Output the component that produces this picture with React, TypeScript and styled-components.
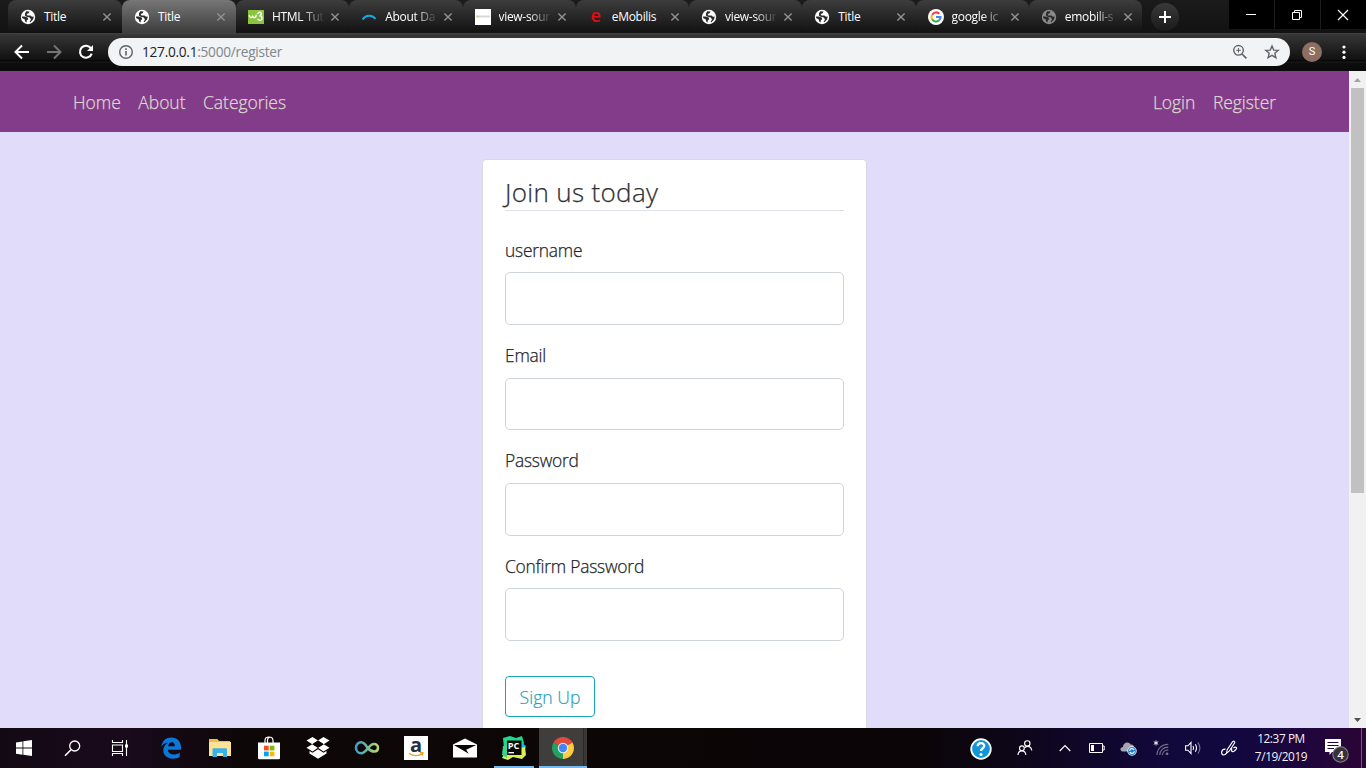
import React from 'react';
import styled, { createGlobalStyle } from 'styled-components';

const Global = createGlobalStyle`
  *, *::before, *::after { box-sizing: border-box; }
  html, body { margin: 0; padding: 0; overflow: hidden; }
  body { font-family: "Open Sans", "Noto Sans", sans-serif; }
  svg { display: block; flex: none; overflow: visible; }
`;

const Screen = styled.div`
  width: 1366px;
  height: 768px;
  display: flex;
  flex-direction: column;
  overflow: hidden;
  background: #000;
`;

/* ---------- browser window ---------- */

const TabStrip = styled.div`
  height: 33px;
  flex: none;
  display: flex;
  padding-left: 8px;
  background: linear-gradient(#1b1b1b, #121212);
`;

const TabShell = styled.div<{ $active?: boolean; $divider?: boolean; $wide?: boolean }>`
  position: relative;
  width: ${p => (p.$wide ? 114 : 113.25)}px;
  height: 33px;
  flex: none;
  display: flex;
  align-items: center;
  padding-left: 12px;
  border-radius: ${p => (p.$active ? '8px 8px 0 0' : '8px 8px 6px 6px')};
  background: ${p => (p.$active ? 'linear-gradient(#767676, #3c3c3c)' : 'linear-gradient(#3d3d3d, #111)')};
  &::after {
    content: '';
    display: ${p => (p.$divider ? 'block' : 'none')};
    position: absolute;
    right: -1px;
    top: 7px;
    width: 1px;
    height: 20px;
    background: #5c5c5c;
  }
`;

const TabTitle = styled.span<{ $fade?: boolean }>`
  width: 54px;
  margin: 1px 5px 0 8px;
  height: 18px;
  line-height: 17px;
  font-size: 12px;
  letter-spacing: -0.3px;
  color: #fff;
  white-space: nowrap;
  mask-image: ${p => (p.$fade ? 'linear-gradient(90deg, #000 55%, transparent 98%)' : 'none')};
`;

const NewTab = styled.div`
  width: 28px;
  height: 28px;
  margin: 3px 0 0 9px;
  border-radius: 50%;
  display: flex;
  align-items: center;
  justify-content: center;
  background: linear-gradient(#3a3a3a, #1a1a1a);
`;

const WindowButtons = styled.div`
  margin-left: auto;
  width: 137px;
  height: 29px;
  display: flex;
  gap: 1px;
  background: #1c1c1c;
`;

const WindowButton = styled.div`
  flex: 1;
  display: flex;
  align-items: center;
  justify-content: center;
  padding-right: 2px;
  background: #000;
`;

const Toolbar = styled.div`
  height: 38px;
  flex: none;
  display: flex;
  align-items: center;
  padding-left: 13px;
  background: linear-gradient(#444 0, #353535 2px, #101010 27px, #000 28px, #1e1e1e 29px, #0d0d0d 30px, #0a0a0a 38px);
`;

const NavIcons = styled.div`
  width: 95px;
  display: flex;
  gap: 14px;
`;

const Omnibox = styled.div`
  width: 1182px;
  height: 28px;
  border-radius: 14px;
  background: #f1f3f4;
  display: flex;
  align-items: center;
  padding: 0 10px;
`;

const Address = styled.span`
  flex: 1;
  margin-left: 8px;
  font-size: 13.7px;
  letter-spacing: -0.28px;
  line-height: 20px;
  color: #80868b;
  b { font-weight: 400; color: #202124; }
`;

const OmniActions = styled.div`
  display: flex;
  gap: 16px;
`;

const Avatar = styled.div`
  width: 20px;
  height: 20px;
  margin: 0 20px 0 12px;
  border-radius: 50%;
  background: #8d6e63;
  color: #fff;
  font: 11px/20px Roboto, sans-serif;
  text-align: center;
`;

/* ---------- web page ---------- */

const Viewport = styled.div`
  height: 657px;
  flex: none;
  display: flex;
  overflow: hidden;
`;

const Page = styled.div`
  width: 1349px;
  display: flex;
  flex-direction: column;
  align-items: center;
  background: #e1dcfa;
  font-weight: 300;
  -webkit-text-stroke-width: 0.25px;
`;

const Navbar = styled.nav`
  width: 100%;
  height: 61px;
  flex: none;
  display: flex;
  align-items: center;
  justify-content: space-between;
  padding: 1px 73px 0;
  background: #833c89;
`;

const NavGroup = styled.div`
  display: flex;
  gap: 17.6px;
`;

const NavLink = styled.a`
  font-size: 17.5px;
  line-height: 26px;
  letter-spacing: -0.05px;
  color: #dcd8cf;
`;

const Card = styled.form`
  width: 385px;
  height: 660px;
  flex: none;
  margin-top: 27px;
  padding: 16px 22px;
  border: 1px solid #d9d7e0;
  border-radius: 4px;
  background: #fff;
`;

const Legend = styled.div`
  height: 35px;
  margin-bottom: 25px;
  border-bottom: 1px solid #dee2e6;
  font-size: 26px;
  line-height: 32px;
  letter-spacing: 0.33px;
  color: #2d3236;
`;

const Field = styled.label`
  display: flex;
  flex-direction: column;
  height: 105.2px;
  font-size: 17.4px;
  line-height: 29.6px;
  letter-spacing: -0.22px;
  color: #212529;
`;

const Input = styled.input`
  width: 100%;
  height: 52.8px;
  margin-top: 6.8px;
  border: 1px solid #ced4da;
  border-radius: 5px;
  background: #fff;
`;

const Submit = styled.button`
  width: 90px;
  height: 41px;
  margin-top: 19px;
  padding: 1px 0 0;
  border: 1px solid #17a2b8;
  border-radius: 4px;
  background: transparent;
  color: #2c9fb7;
  font: 300 17.6px/26px "Open Sans", sans-serif;
  -webkit-text-stroke-width: 0.2px;
`;

const Scrollbar = styled.div`
  width: 17px;
  display: flex;
  flex-direction: column;
  align-items: center;
  background: #f1f1f1;
`;

const ScrollThumb = styled.div`
  width: 13px;
  height: 405px;
  background: #c1c1c1;
`;

const ScrollArrow = styled.div<{ $end?: boolean }>`
  width: 17px;
  height: 17px;
  display: flex;
  align-items: center;
  justify-content: center;
  margin-top: ${p => (p.$end ? 'auto' : '0')};
`;

/* ---------- desktop taskbar ---------- */

const Taskbar = styled.div`
  height: 40px;
  flex: none;
  display: flex;
  background: linear-gradient(90deg, #130914 0, #190a1c 130px, #0e0708 240px, #0d0606 600px, #0b0508 920px, #0d0618 1010px, #12083a 1160px, #10083f 1230px, #1d063d 1300px, #2b0535 1366px);
`;

const TaskButton = styled.div<{ $w?: number; $open?: boolean; $active?: boolean }>`
  width: ${p => p.$w ?? 49}px;
  height: 40px;
  flex: none;
  display: flex;
  align-items: center;
  justify-content: center;
  background: ${p => (p.$active ? 'linear-gradient(90deg, #403d3d 44px, #2a2727 44px, #2a2727 45px, #3a3737 45px)' : 'none')};
  box-shadow: ${p => (p.$open ? 'inset 0 -2px #76b9ed' : 'none')};
`;

const OpenApp = styled.div`
  width: 40px;
  height: 40px;
  display: flex;
  align-items: center;
  justify-content: center;
  box-shadow: inset 0 -2px #76b9ed;
`;

const Tray = styled.div`
  margin-left: auto;
  display: flex;
`;

const Clock = styled.div`
  width: 60px;
  padding: 1px 0 0 2px;
  text-align: center;
  color: #f2f0f5;
  font-size: 11.8px;
  letter-spacing: -0.4px;
  line-height: 18px;
  white-space: nowrap;
`;

const ShowDesktop = styled.div`
  width: 5px;
  height: 40px;
  border-left: 1px solid #6c5877;
`;

/* ---------- icons ---------- */

const Globe = ({ dim }: { dim?: boolean }) => (
  <svg width="16" height="16" viewBox="0 0 16 16">
    <circle cx="8" cy="8" r="7.2" fill={dim ? '#8a8a8a' : '#fff'} />
    <path d="M1.8 7.4L4.6 7.6L7.6 8.6L8.3 10.2L6.8 11.3L6.6 13.6L5.2 12.4L4.6 10.2L2.4 9.3ZM6.2 2.2L9.6 2.4L8.6 4.2L6.6 5.1L7.4 6.6L10.4 6.4L12 7.8L13.8 7.6L13 10.6L10.4 13.2L9.6 12.8L11 10.4L9.8 8.6L6.6 7.8L4.9 6.6L5 4.4Z" fill="#2a2a2a" />
  </svg>
);

const W3Icon = () => (
  <svg width="16" height="16" viewBox="0 0 16 16">
    <path d="M0 1H16V15H0Z" fill="#8ac53f" />
    <path d="M1.3 6C1.2 9 4 9.6 4.6 6.6C5 9.6 8 9.4 8.4 5.6M9.6 5C10.6 2.4 13.6 3 13.2 5.2C13 6.4 12 6.8 11.4 6.8C14.6 6.8 15 11.2 11.8 11.4C10.6 11.4 10 10.8 9.7 9.8" fill="none" stroke="#fff" strokeWidth="1.4" />
  </svg>
);

const ArcIcon = () => (
  <svg width="16" height="16" viewBox="0 0 16 16">
    <path d="M1.5 10.5C4.5 5.8 11 5.6 14.5 9.8" fill="none" stroke="#14a9e0" strokeWidth="2" />
  </svg>
);

const SourceIcon = () => (
  <svg width="16" height="16" viewBox="0 0 16 16">
    <path d="M0 0H16V16H0Z" fill="#fff" />
    <path d="M1 7.5H5" stroke="#c5dba8" strokeWidth="2" />
    <path d="M5 7.5H15" stroke="#d4dbd6" strokeWidth="2" />
  </svg>
);

const RedE = styled.span`
  width: 16px;
  height: 16px;
  font-size: 18px;
  line-height: 12px;
  font-weight: 600;
  text-align: center;
  color: #e30b13;
`;

const GoogleIcon = () => (
  <svg width="16" height="16" viewBox="0 0 16 16">
    <circle cx="8" cy="8" r="8" fill="#fff" />
    <g fill="none" strokeWidth="2.1">
      <path d="M4.1 5.7A4.5 4.5 0 0 1 11.3 4.8" stroke="#ea4335" />
      <path d="M4.1 5.7A4.5 4.5 0 0 0 4.1 10.3" stroke="#fbbc05" />
      <path d="M4.1 10.3A4.5 4.5 0 0 0 11.1 11.3" stroke="#34a853" />
      <path d="M8 8H12.5A4.5 4.5 0 0 1 11.1 11.3" stroke="#4285f4" />
    </g>
  </svg>
);

const CloseX = () => (
  <svg width="8" height="8" viewBox="0 0 8 8">
    <path d="M0.4 0.4L7.6 7.6M7.6 0.4L0.4 7.6" stroke="#929292" strokeWidth="1.4" />
  </svg>
);

const tabs: { title: string; icon: React.ReactNode; fade?: boolean; active?: boolean; divider?: boolean }[] = [
  { title: 'Title', icon: <Globe /> },
  { title: 'Title', icon: <Globe />, active: true },
  { title: 'HTML Tut', icon: <W3Icon />, fade: true, divider: true },
  { title: 'About Da', icon: <ArcIcon />, fade: true, divider: true },
  { title: 'view-sour', icon: <SourceIcon />, fade: true, divider: true },
  { title: 'eMobilis', icon: <RedE>e</RedE>, divider: true },
  { title: 'view-sour', icon: <Globe />, fade: true, divider: true },
  { title: 'Title', icon: <Globe />, divider: true },
  { title: 'google ic', icon: <GoogleIcon />, fade: true, divider: true },
  { title: 'emobili-s', icon: <Globe dim />, fade: true },
];

const fields = [
  { label: 'username', type: 'text' },
  { label: 'Email', type: 'email' },
  { label: 'Password', type: 'password' },
  { label: 'Confirm Password', type: 'password' },
];

const BrowserTabs = () => (
  <TabStrip>
    {tabs.map((t, i) => (
      <TabShell key={i} $active={t.active} $divider={t.divider} $wide={i < 2}>
        {t.icon}
        <TabTitle $fade={t.fade}>{t.title}</TabTitle>
        <CloseX />
      </TabShell>
    ))}
    <NewTab>
      <svg width="12" height="12" viewBox="0 0 12 12"><path d="M6 0V12M0 6H12" stroke="#fff" strokeWidth="2" /></svg>
    </NewTab>
    <WindowButtons>
      <WindowButton>
        <svg width="10" height="10" viewBox="0 0 10 10"><path d="M0 4.5H10" stroke="#fff" /></svg>
      </WindowButton>
      <WindowButton>
        <svg width="10" height="10" viewBox="0 0 10 10"><path d="M0.5 2.5H7.5V9.5H0.5ZM2.5 2.5V0.5H9.5V7.5H7.5" fill="none" stroke="#fff" /></svg>
      </WindowButton>
      <WindowButton>
        <svg width="10" height="10" viewBox="0 0 10 10"><path d="M0 0L10 10M10 0L0 10" stroke="#fff" strokeWidth="1.2" /></svg>
      </WindowButton>
    </WindowButtons>
  </TabStrip>
);

const BrowserToolbar = () => (
  <Toolbar>
    <NavIcons>
      <svg width="18" height="18" viewBox="0 0 18 18"><path d="M16 9H3M9 2.5L2.5 9L9 15.5" fill="none" stroke="#fff" strokeWidth="2" /></svg>
      <svg width="18" height="18" viewBox="0 0 18 18"><path d="M2 9H15M9 2.5L15.5 9L9 15.5" fill="none" stroke="#747474" strokeWidth="2" /></svg>
      <svg width="18" height="18" viewBox="0 0 18 18">
        <path d="M14 5.4A6 6 0 1 0 14.7 10.6" fill="none" stroke="#fff" strokeWidth="2.1" />
        <path d="M16 2V8H10Z" fill="#fff" />
      </svg>
    </NavIcons>
    <Omnibox>
      <svg width="16" height="16" viewBox="0 0 16 16">
        <circle cx="8" cy="8" r="6.3" fill="none" stroke="#5f6368" strokeWidth="1.4" />
        <path d="M8 7V11.5M8 4.3V5.9" stroke="#5f6368" strokeWidth="1.6" />
      </svg>
      <Address><b>127.0.0.1</b>:5000/register</Address>
      <OmniActions>
        <svg width="16" height="16" viewBox="0 0 16 16">
          <circle cx="6.5" cy="6.3" r="4.8" fill="none" stroke="#5f6368" strokeWidth="1.4" />
          <path d="M10 10L14.4 14.4" stroke="#5f6368" strokeWidth="1.7" />
          <path d="M6.5 4V8.6M4.2 6.3H8.8" stroke="#5f6368" strokeWidth="1" />
        </svg>
        <svg width="16" height="16" viewBox="0 0 16 16">
          <path d="M8 2L9.7 6.1L14.2 6.4L10.8 9.3L11.9 13.7L8 11.3L4.1 13.7L5.2 9.3L1.8 6.4L6.3 6.1Z" fill="none" stroke="#5f6368" strokeWidth="1.4" />
        </svg>
      </OmniActions>
    </Omnibox>
    <Avatar>S</Avatar>
    <svg width="4" height="14" viewBox="0 0 4 14">
      <g fill="#fff"><circle cx="2" cy="2" r="1.6" /><circle cx="2" cy="7.2" r="1.6" /><circle cx="2" cy="12.4" r="1.6" /></g>
    </svg>
  </Toolbar>
);

const StartIcon = () => (
  <svg width="16" height="16" viewBox="0 0 16 16">
    <path d="M0 2.4L6.5 1.4V7.6H0ZM7.3 1.3L16 0V7.6H7.3ZM0 8.5H6.5V14.7L0 13.7ZM7.3 8.5H16V16L7.3 14.8Z" fill="#fff" />
  </svg>
);
const SearchIcon = () => (
  <svg width="17" height="17" viewBox="0 0 17 17">
    <circle cx="10.7" cy="6" r="5" fill="none" stroke="#fff" strokeWidth="1.3" />
    <path d="M7 9.7L1 15.8" stroke="#fff" strokeWidth="1.5" />
  </svg>
);
const TaskViewIcon = () => (
  <svg width="18" height="16" viewBox="0 0 18 16">
    <path d="M0.5 0V2.5H10.5V0M0.5 5H10.5V11.5H0.5ZM0.5 16V13.5H10.5V16M14.5 0V16" fill="none" stroke="#fff" strokeWidth="1.1" />
    <path d="M13 4.5H16V7.5H13Z" fill="#fff" />
  </svg>
);
const EdgeIcon = () => (
  <svg width="20" height="22" viewBox="0 0 20 22">
    <path d="M0.3 9.5C1.3 3.5 5.2 0.4 10.2 0.4C16.2 0.4 20 4.5 20 10.3V12.8H6.9C7.2 16.1 9.5 17.5 12.5 17.5C14.8 17.5 16.9 16.8 18.7 15.7V20C16.8 21.1 14.6 21.7 12 21.7C6 21.7 2.3 18.3 2.3 13.3C2.3 9.8 4.2 7.2 7.1 5.7C4.2 5.9 2 7.2 0.3 9.5ZM7 9.2H13.9C13.9 6.9 12.8 5.2 10.8 5.2C8.8 5.2 7.5 6.7 7 9.2Z" fill="#0b78d7" />
  </svg>
);
const FolderIcon = () => (
  <svg width="22" height="20" viewBox="0 0 22 20">
    <path d="M0 1H8.5L10 3H21V18H0Z" fill="#efbc4b" />
    <path d="M0 4H22V18H0Z" fill="#fbe296" />
    <path d="M3.5 19V11.2Q3.5 10.2 4.5 10.2H17Q18 10.2 18 11.2V19H14V15H8V19Z" fill="#39b1e6" />
  </svg>
);
const StoreIcon = () => (
  <svg width="24" height="24" viewBox="0 0 24 24">
    <path d="M8 7V4.5Q8 1 12 1T16 4.5V7M10.5 7V4Q10.5 2 12.5 1.2" fill="none" stroke="#fff" strokeWidth="1.2" />
    <path d="M1 6.5H23V22Q23 23.3 21.7 23.3H2.3Q1 23.3 1 22Z" fill="#fff" />
    <path d="M7 9.7H11.7V14.4H7Z" fill="#f25022" /><path d="M12.7 9.7H17.4V14.4H12.7Z" fill="#7fba00" />
    <path d="M7 15.6H11.7V20.3H7Z" fill="#00a4ef" /><path d="M12.7 15.6H17.4V20.3H12.7Z" fill="#ffb900" />
  </svg>
);
const DropboxIcon = () => (
  <svg width="24" height="24" viewBox="0 0 24 24">
    <path d="M6.5 1L12 4.6L6.3 8.2L0.5 4.6ZM17.5 1L23.5 4.6L17.7 8.2L12 4.6ZM6.3 8.2L12 11.8L6.5 15.5L0.5 11.8ZM17.7 8.2L23.5 11.8L17.5 15.5L12 11.8ZM12 13.2L17.5 16.8L20.5 15V17.6L12 22.8L3.5 17.6V15L6.5 16.8Z" fill="#fff" />
    <path d="M12 4.6L17.7 8.2L12 11.8L6.3 8.2Z" fill="#0d0606" />
  </svg>
);
const InfinityIcon = () => (
  <svg width="26" height="16" viewBox="0 0 26 16">
    <defs>
      <linearGradient id="inf"><stop offset="0" stopColor="#3e9fcf" /><stop offset="0.5" stopColor="#6ebaa0" /><stop offset="1" stopColor="#bdd66a" /></linearGradient>
    </defs>
    <path d="M13.5 8C11.5 4.5 10 2.3 7.2 2.3C4 2.3 2 4.8 2 7.8C2 11 4.2 13.3 7.2 13.3C12.5 13.3 14.5 4 20 4C22.4 4 24 5.7 24 7.8C24 10 22.4 11.5 20.3 11.5C17.6 11.5 15.5 10 13.5 8" fill="none" stroke="url(#inf)" strokeWidth="2.5" />
  </svg>
);
const AmazonIcon = () => (
  <svg width="24" height="24" viewBox="0 0 24 24">
    <path d="M0 0H24V24H0Z" fill="#fff" />
    <text x="12" y="15.6" fontSize="20" fontWeight="700" fontFamily="Open Sans" textAnchor="middle" fill="#232f3e">a</text>
    <path d="M5 17.2C9 20.4 14.5 20.4 18.2 17.8M15.8 16.6L18.9 16.6L18.3 19.6" fill="none" stroke="#f59b23" strokeWidth="1.3" />
  </svg>
);
const MailIcon = () => (
  <svg width="24" height="20" viewBox="0 0 24 20">
    <path d="M0 6.5L12 0.5L24 6.5V19.5H0Z" fill="#fff" />
    <path d="M0.8 7H23.3L13.2 11.7L15.8 15.8Z" fill="#0d0606" />
  </svg>
);
const PyCharmIcon = () => (
  <svg width="24" height="24" viewBox="0 0 24 24">
    <path d="M1 2L8 0L14 2L20 0L22 7L20 16L6 18L2 13Z" fill="#21d789" />
    <path d="M19 6L24 10L22 17L18 16Z" fill="#10bce8" />
    <path d="M18 12L23 11L24 19L20 23L11 21L6 24L0 22L4 15Z" fill="#def14a" />
    <path d="M1 10L5 10V22L0 19Z" fill="#36d78a" />
    <path d="M5 4.5H19.5V19H5Z" fill="#090909" />
    <text x="5.8" y="13.3" fontSize="9.2" fontWeight="700" fontFamily="Open Sans" fill="#fff">PC</text>
    <path d="M6.5 16.7H12" stroke="#fff" strokeWidth="1.4" />
  </svg>
);
const ChromeIcon = () => (
  <svg width="22" height="22" viewBox="0 0 22 22">
    <path d="M11 11L1.5 5.5A11 11 0 0 1 20.5 5.5Z" fill="#e14b3b" />
    <path d="M11 11L20.5 5.5A11 11 0 0 1 11 22Z" fill="#fdcd3e" />
    <path d="M11 11V22A11 11 0 0 1 1.5 5.5Z" fill="#21a260" />
    <path d="M11 6H20.7L20.5 5.5L18 3Z" fill="#e14b3b" />
    <path d="M15.4 13.5L10.9 22L16 20Z" fill="#fdcd3e" />
    <path d="M6.6 13.6L1.5 5.4L1 13Z" fill="#21a260" />
    <circle cx="11" cy="11" r="5.2" fill="#f1f1f1" />
    <circle cx="11" cy="11" r="4.2" fill="#4285f4" />
  </svg>
);
const HelpIcon = () => (
  <svg width="22" height="22" viewBox="0 0 22 22">
    <circle cx="11" cy="12" r="9.8" fill="#1296db" stroke="#fff" strokeWidth="1.8" />
    <path d="M7.7 9.3C7.8 4.9 14.4 5.2 14.2 9C14.1 11.3 11 11.3 11 14.1" fill="none" stroke="#fff" strokeWidth="2.3" />
    <circle cx="11" cy="17.4" r="1.5" fill="#fff" />
  </svg>
);
const PeopleIcon = () => (
  <svg width="16" height="16" viewBox="0 0 16 16">
    <g fill="none" stroke="#fff" strokeWidth="1.15">
      <circle cx="4.9" cy="8.3" r="2.4" /><path d="M1 15C1.2 9.5 8.6 9.5 8.8 15" />
      <circle cx="10.3" cy="3.4" r="2.7" /><path d="M7.8 7.6C10.8 5 14.5 6.7 14.8 10.5" />
    </g>
  </svg>
);
const ChevronIcon = () => (
  <svg width="12" height="8" viewBox="0 0 12 8"><path d="M0.7 7L6 1.5L11.3 7" fill="none" stroke="#fff" strokeWidth="1.2" /></svg>
);
const BatteryIcon = () => (
  <svg width="16" height="10" viewBox="0 0 16 10">
    <path d="M0.5 0.5H13.5V9.5H0.5ZM13.5 3H15.2V7H13.5" fill="none" stroke="#fff" />
    <path d="M2 2H5V8H2Z" fill="#fff" />
  </svg>
);
const CloudIcon = () => (
  <svg width="17" height="16" viewBox="0 0 17 16">
    <path d="M2.5 11.5C-0.5 11 0 7 3 7C3 2 9 1 10.7 4.5C13 4.3 14.2 6 14 8V11.5Z" fill="#a5a5ae" />
    <circle cx="12" cy="11" r="4.7" fill="#fff" /><circle cx="12" cy="11" r="3.9" fill="#1979ce" />
    <path d="M9.6 10.8C9.8 8.2 13 7.9 14.2 9.9M14.4 11.3C14.2 13.8 11 14 9.8 12.1" fill="none" stroke="#fff" strokeWidth="1.2" />
  </svg>
);
const WifiIcon = () => (
  <svg width="16" height="16" viewBox="0 0 16 16">
    <path d="M3 0.5V5.5M0.8 1.7L5.2 4.3M5.2 1.7L0.8 4.3" stroke="#fff" strokeWidth="0.9" />
    <g fill="none" stroke="#77728f" strokeWidth="1.1">
      <path d="M4 15C4 8.8 8.8 4.2 15.3 4.2M6.8 15C6.8 10.5 10.4 7.1 15.3 7.1M9.5 15C9.5 12 12 9.9 15.3 9.9" />
    </g>
    <circle cx="14" cy="13.8" r="1.4" fill="#77728f" />
  </svg>
);
const VolumeIcon = () => (
  <svg width="17" height="14" viewBox="0 0 17 14">
    <path d="M0.6 4.8H3L6 1.5V12.5L3 9.2H0.6Z" fill="none" stroke="#fff" strokeWidth="1.1" />
    <path d="M8 5Q9.2 7 8 9M10.3 3.3Q12.8 7 10.3 10.7" fill="none" stroke="#fff" strokeWidth="1.1" />
    <path d="M12.8 1.3Q17 7 12.8 12.7" fill="none" stroke="#77728f" strokeWidth="1.1" />
  </svg>
);
const PenIcon = () => (
  <svg width="17" height="17" viewBox="0 0 17 17">
    <path d="M5.4 13.4L6.2 9.6L11.6 1.6Q13.6 0.2 13.8 2.6L8.4 11Z" fill="none" stroke="#fff" strokeWidth="1.1" />
    <path d="M4.6 9.2C0 8.8 -0.6 14.6 2.6 15C4.4 15 5 14 5.4 13.2M9.6 9C10.8 8 11 9 10.6 10.4C10.4 12.4 12.6 11.8 13.8 10.6C15.4 9 16.4 8.6 15.4 7.4C14.4 6.8 13.4 7.2 12.4 8" fill="none" stroke="#fff" strokeWidth="1.2" />
  </svg>
);
const NotificationIcon = () => (
  <svg width="26" height="26" viewBox="0 0 26 26">
    <path d="M1 1H17V14H8L5.5 17V14H1Z" fill="#fff" />
    <path d="M3.5 4.5H14.5M3.5 7.5H14.5M3.5 10.5H10" stroke="#210536" strokeWidth="1" />
    <circle cx="16.5" cy="16.5" r="7.7" fill="#353039" stroke="#84808a" strokeWidth="1.1" />
    <text x="16.5" y="20.6" fontSize="11.5" fontWeight="600" fontFamily="Open Sans" textAnchor="middle" fill="#fff">4</text>
  </svg>
);

const NotificationCell = styled(TaskButton)`
  padding: 5px 0 0 3px;
`;

export default function App() {
  return (
    <Screen>
      <Global />
      <BrowserTabs />
      <BrowserToolbar />
      <Viewport>
        <Page>
          <Navbar>
            <NavGroup>
              <NavLink>Home</NavLink>
              <NavLink>About</NavLink>
              <NavLink>Categories</NavLink>
            </NavGroup>
            <NavGroup>
              <NavLink>Login</NavLink>
              <NavLink>Register</NavLink>
            </NavGroup>
          </Navbar>
          <Card>
            <Legend>Join us today</Legend>
            {fields.map(f => (
              <Field key={f.label}>
                {f.label}
                <Input type={f.type} />
              </Field>
            ))}
            <Submit type="button">Sign Up</Submit>
          </Card>
        </Page>
        <Scrollbar>
          <ScrollArrow>
            <svg width="7" height="4" viewBox="0 0 7 4"><path d="M0 4L3.5 0L7 4Z" fill="#a3a3a3" /></svg>
          </ScrollArrow>
          <ScrollThumb />
          <ScrollArrow $end>
            <svg width="7" height="4" viewBox="0 0 7 4"><path d="M0 0L3.5 4L7 0Z" fill="#505050" /></svg>
          </ScrollArrow>
        </Scrollbar>
      </Viewport>
      <Taskbar>
        <TaskButton $w={48}><StartIcon /></TaskButton>
        <TaskButton $w={48}><SearchIcon /></TaskButton>
        <TaskButton $w={50}><TaskViewIcon /></TaskButton>
        <TaskButton><EdgeIcon /></TaskButton>
        <TaskButton><FolderIcon /></TaskButton>
        <TaskButton><StoreIcon /></TaskButton>
        <TaskButton><DropboxIcon /></TaskButton>
        <TaskButton><InfinityIcon /></TaskButton>
        <TaskButton><AmazonIcon /></TaskButton>
        <TaskButton><MailIcon /></TaskButton>
        <TaskButton $w={50}><OpenApp><PyCharmIcon /></OpenApp></TaskButton>
        <TaskButton $w={48} $open $active><ChromeIcon /></TaskButton>
        <Tray>
          <TaskButton $w={41}><HelpIcon /></TaskButton>
          <TaskButton $w={48}><PeopleIcon /></TaskButton>
          <TaskButton $w={32}><ChevronIcon /></TaskButton>
          <TaskButton $w={32}><BatteryIcon /></TaskButton>
          <TaskButton $w={31}><CloudIcon /></TaskButton>
          <TaskButton $w={33}><WifiIcon /></TaskButton>
          <TaskButton $w={32}><VolumeIcon /></TaskButton>
          <TaskButton $w={41}><PenIcon /></TaskButton>
          <Clock>
            <div>12:37 PM</div>
            <div>7/19/2019</div>
          </Clock>
          <NotificationCell $w={51}><NotificationIcon /></NotificationCell>
          <ShowDesktop />
        </Tray>
      </Taskbar>
    </Screen>
  );
}
